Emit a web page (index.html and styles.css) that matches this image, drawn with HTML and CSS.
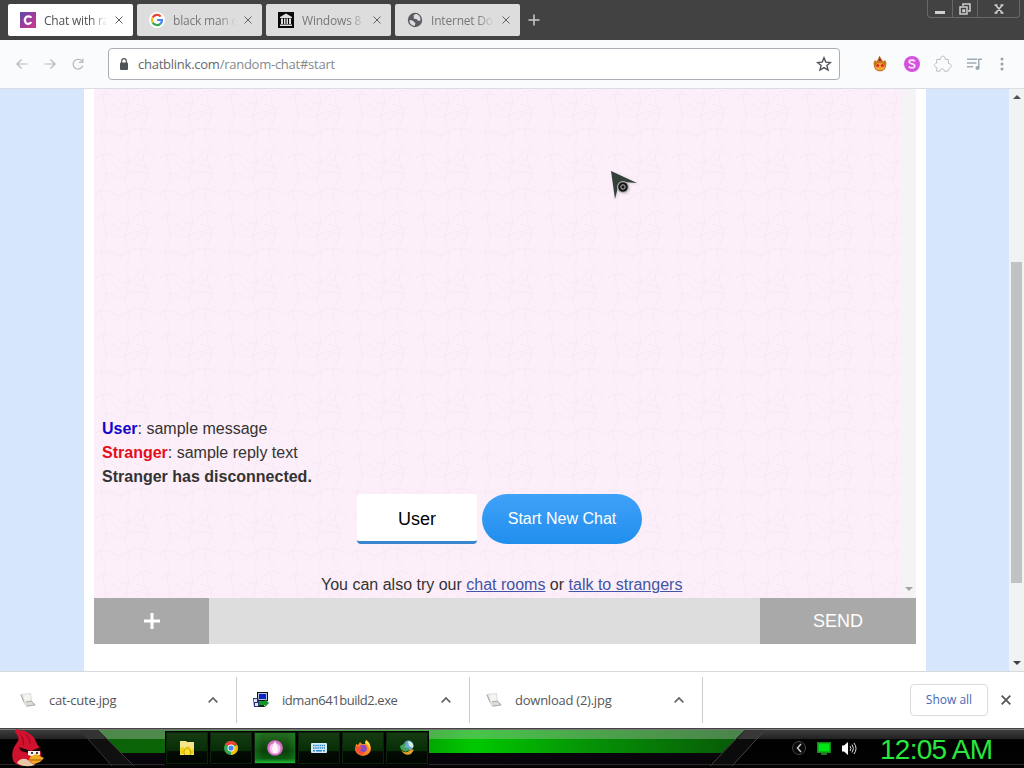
FILE: index.html
```html
<!DOCTYPE html>
<html lang="en">
<head>
<meta charset="utf-8">
<title>Random chat</title>
<link rel="stylesheet" href="styles.css">
</head>
<body>
<div class="screen">
  <header class="titlebar">
    <div class="tabs">
      <div class="tab active">
        <svg class="fav" viewBox="0 0 16 16"><defs><linearGradient id="cg" x1="0" y1="0" x2="1" y2="1"><stop offset="0" stop-color="#5c4ba8"/><stop offset=".6" stop-color="#a63a9c"/><stop offset="1" stop-color="#d03a8c"/></linearGradient></defs><rect width="16" height="16" fill="url(#cg)"/><path d="M11.3 5.8C10.5 4 6.7 3.6 5.4 6c-1 2.200-.6 5.200 2.100 5.800 1.800.2 3-.5 3.700-1.800" fill="none" stroke="#fff" stroke-width="2.300"/></svg>
        <span class="tab-title">Chat with ra</span>
        <svg class="x" viewBox="0 0 8 8"><path d="M.5.5l7 7M7.500.5l-7 7"/></svg>
      </div>
      <div class="tab">
        <svg class="fav" viewBox="0 0 16 16"><circle cx="8" cy="8" r="8" fill="#fff"/><g fill="none" stroke-width="2.200"><path d="M11.700 4.500A5 5 0 0 0 3.600 5.600" stroke="#ea4335"/><path d="M3.600 5.600a5 5 0 0 0 0 4.800" stroke="#fbbc05"/><path d="M3.600 10.400a5 5 0 0 0 7.700 1.400" stroke="#34a853"/><path d="M11.300 11.800A5 5 0 0 0 13 8H8.200" stroke="#4285f4"/></g></svg>
        <span class="tab-title">black man o</span>
        <svg class="x" viewBox="0 0 8 8"><path d="M.5.5l7 7M7.500.5l-7 7"/></svg>
      </div>
      <div class="tab">
        <svg class="fav" viewBox="0 0 16 16"><rect width="16" height="16" fill="#080808"/><path d="M2 5l6-3.500L14 5v1H2zM3 6.500h2V12H3zM6 6.500h1.500V12H6zM8.500 6.500H10V12H8.500zM11 6.500h2V12h-2zM2 12.500h12V14H2z" fill="#ddd"/></svg>
        <span class="tab-title">Windows 8</span>
        <svg class="x" viewBox="0 0 8 8"><path d="M.5.5l7 7M7.500.5l-7 7"/></svg>
      </div>
      <div class="tab">
        <svg class="fav" viewBox="0 0 16 16"><circle cx="8" cy="8" r="7.200" fill="#5b5b62"/><path d="M2.300 8.500c2-.5 3.700.1 4.500 1.200.6 1 2 .8 1.500 2.200L7.500 14C4.500 13.500 2.500 11.500 2.300 8.500zM9 2c-2 .6-3 1.300-2.200 2.500.8.8-.8 1.200-.1 2 1 .8 3.200.1 3.800 1.500.5 1 1.500 1.300 2.900.6C14 5.500 12.200 2.700 9 2z" fill="#dedddd"/></svg>
        <span class="tab-title">Internet Do</span>
        <svg class="x" viewBox="0 0 8 8"><path d="M.5.5l7 7M7.500.5l-7 7"/></svg>
      </div>
      <svg class="newtab" viewBox="0 0 12 12"><path d="M6 .5v11M.5 6h11"/></svg>
    </div>
    <div class="winbtns">
      <span class="wb w1"><svg viewBox="0 0 12 12"><path d="M1 9.500h10" stroke-width="3"/></svg></span>
      <span class="wb w2"><svg viewBox="0 0 12 12"><path d="M4 3V1h7v7H9M1 4h7v7H1zM4 7h1.500v1.500H4z" stroke-width="1.500"/></svg></span>
      <span class="wb w3"><svg viewBox="0 0 12 12"><path d="M2.500 2l7 8M9.500 2l-7 8M1.500 2h3M7.500 2h3M1.500 10h3M7.500 10h3" stroke-width="1.600"/></svg></span>
    </div>
  </header>

  <nav class="toolbar">
    <svg class="nav" viewBox="0 0 12 12"><path d="M11.500 6H1M5.500 1.500L1 6l4.500 4.500"/></svg>
    <svg class="nav" viewBox="0 0 12 12"><path d="M.5 6H11M6.500 1.500L11 6l-4.500 4.500"/></svg>
    <svg class="nav" viewBox="0 0 12 12"><path d="M10 3.200A4.900 4.900 0 1 0 10.800 7.500M10.800.5v3.800H7"/></svg>
    <div class="omnibox">
      <svg class="lock" viewBox="0 0 10 12"><rect x="1" y="4.500" width="8" height="7.500" rx="1" fill="#505356"/><path d="M2.700 5V3a2.300 2.300 0 0 1 4.600 0v2" fill="none" stroke="#505356" stroke-width="1.200"/></svg>
      <span class="url"><span class="host">chatblink.com</span>/random-chat#start</span>
      <svg class="star" viewBox="0 0 16 16"><path d="M8 1.800l1.800 4.300 4.600.4-3.500 3 1.100 4.500L8 11.600 4 14l1.100-4.500-3.500-3 4.600-.4z"/></svg>
    </div>
    <div class="ext">
      <svg class="e16" viewBox="0 0 16 16"><path d="M2 10C1 7 2 5.500 3 4l1.500 1.500L6 3l1.500-3L10 4l1.500 1.500L13 4c1 1.500 2 3 1 6-.5 7-11.500 7-12 0z" fill="#c8741c"/><path d="M3.500 10c0-4 9-4 9 0s-1.500 4-4.500 4-4.500 0-4.500-4z" fill="#f3a33c"/><circle cx="5.700" cy="9.500" r="1.500" fill="#d62b20"/><circle cx="10.300" cy="9.500" r="1.500" fill="#d62b20"/><path d="M7.500 0l2 5-3 0z" fill="#a82b2b"/></svg>
      <svg class="e16" viewBox="0 0 16 16"><circle cx="8" cy="8" r="8" fill="#d552df"/><path d="M10.800 5.400C9.500 3.500 5 3.600 5.200 6c.2 2.300 5.700 1.300 5.600 4-.3 2.400-4.700 2.400-6 .5" fill="none" stroke="#fbe2ff" stroke-width="1.900"/></svg>
      <svg class="e20" viewBox="0 0 20 20"><path d="M3 5h4c-.5-5 6-5 5.500 0H16v4.500c4 0 4 4.500 1 5L15.500 18h-4c0-3.500-5-3.500-5 0H3v-4c-3.500-1-3-4.500 0-5z" fill="none" stroke="#b4babd"/></svg>
      <svg class="e18" viewBox="0 0 18 16"><path d="M1 3h11M1 7h10M1 11h6.500M13.500 12V3H17" fill="none" stroke="#a0abb2" stroke-width="1.600"/><circle cx="12.200" cy="12.200" r="2.200" fill="#9aa8b2"/></svg>
      <svg class="dots" viewBox="0 0 4 14"><circle cx="2" cy="2" r="1.500"/><circle cx="2" cy="7" r="1.500"/><circle cx="2" cy="12" r="1.500"/></svg>
    </div>
  </nav>

  <main class="viewport">
    <div class="page">
      <div class="chat">
        <svg class="texture" width="807" height="509"><defs><pattern id="tex" width="64" height="60" patternUnits="userSpaceOnUse"><path d="M2 9q12-9 21 1t19-3 20 4M6 26c10-8 16 9 27 0s20 3 28-2M1 44c16-7 20 7 31 0s20-5 30 2M12 1c-8 14 6 19-2 34s3 17 1 25M32 2c8 15-6 23 1 36s-3 15 0 22M51 1c-6 15 7 19 0 32s-3 17 1 26M17 14l11 9M37 32l10-7M20 52l9-6M42 15l14 5"/></pattern></defs><rect width="807" height="509" fill="url(#tex)" stroke="none"/></svg>
        <div class="chat-body">
          <p class="msg"><b class="me">User</b>: sample message</p>
          <p class="msg"><b class="them">Stranger</b>: sample reply text</p>
          <p class="msg"><b>Stranger has disconnected.</b></p>
          <div class="restart"><div class="name">User</div><div class="start">Start New Chat</div></div>
          <p class="also">You can also try our <a>chat rooms</a> or <a>talk to strangers</a></p>
        </div>
        <div class="chat-scroll"><i></i></div>
      </div>
      <div class="composer">
        <div class="plus"><svg viewBox="0 0 16 16"><path d="M8 0v16M0 8h16"/></svg></div>
        <div class="entry"></div>
        <div class="send">SEND</div>
      </div>
    </div>
    <div class="scrollbar"><i class="up"></i><i class="thumb"></i><i class="down"></i></div>
  </main>

  <section class="downloads">
    <div class="dl">
      <svg class="file" viewBox="0 0 16 16"><path d="M0 2l11-1 1 8 4 4-10 2-2-4z" fill="#dddcda"/><path d="M3 3l7-1 1 7-6 1z" fill="#f4f3f0"/><path d="M6 10l5-1 4 4-8 1M1 3l3 7" fill="none" stroke="#aaa"/></svg>
      <span class="fname">cat-cute.jpg</span>
      <svg class="chev" viewBox="0 0 10 6"><path d="M.7 5.300L5 1l4.300 4.300"/></svg>
    </div>
    <div class="dl">
      <svg class="file" viewBox="0 0 16 16"><path d="M4 0h11v9H4z" fill="#111"/><path d="M5 1h9v7H5z" fill="#b9c4d8"/><path d="M6 2h7v5H6z" fill="#0b23c9"/><path d="M0 6h5l2 4-1 5H1z" fill="#26336e"/><path d="M1 7h3v3H1zM2 11h3v3H2z" fill="#dfe6f4"/><path d="M6 9h6V7l4 4-4 4v-2H6z" fill="#14972a"/><path d="M6 13h5l1 2H6z" fill="#102a10"/></svg>
      <span class="fname exe">idman641build2.exe</span>
      <svg class="chev" viewBox="0 0 10 6"><path d="M.7 5.300L5 1l4.300 4.300"/></svg>
    </div>
    <div class="dl">
      <svg class="file" viewBox="0 0 16 16"><path d="M0 2l11-1 1 8 4 4-10 2-2-4z" fill="#dddcda"/><path d="M3 3l7-1 1 7-6 1z" fill="#f4f3f0"/><path d="M6 10l5-1 4 4-8 1M1 3l3 7" fill="none" stroke="#aaa"/></svg>
      <span class="fname">download (2).jpg</span>
      <svg class="chev" viewBox="0 0 10 6"><path d="M.7 5.300L5 1l4.300 4.300"/></svg>
    </div>
    <div class="showall">Show all</div>
    <svg class="dlx" viewBox="0 0 10 10"><path d="M.7.7l8.600 8.600M9.300.7L.7 9.300"/></svg>
  </section>

  <footer class="taskbar">
    <svg class="bar-art" viewBox="0 0 1024 40"><defs>
      <linearGradient id="blk" x1="0" y1="0" x2="0" y2="1"><stop offset="0" stop-color="#444"/><stop offset=".27" stop-color="#222"/><stop offset=".29" stop-color="#000"/><stop offset="1" stop-color="#030303"/></linearGradient>
      <linearGradient id="grn" x1="0" y1="0" x2="1" y2="0"><stop offset="0" stop-color="#0b6207"/><stop offset=".4" stop-color="#087006"/><stop offset=".58" stop-color="#00c800"/><stop offset=".75" stop-color="#069506"/><stop offset="1" stop-color="#075707"/></linearGradient></defs>
      <rect width="1024" height="40" fill="url(#blk)"/>
      <path d="M98 2H745L722 25H118z" fill="url(#grn)"/>
      <path d="M98 2H745L736 11H105z" fill="#b5c2b5" opacity=".4"/>
      <path d="M118 25H722L706 38H132z" fill="#09060b"/>
      <path d="M80 2h18l36 36h-22z" fill="#101010"/><path d="M80 2h18l8 9H87z" fill="#333"/><path d="M80 2l32 36M98 2l36 36" stroke="#363636" fill="none"/>
      <path d="M745 2h20l-33 36h-23z" fill="#0b0b0b"/><path d="M745 2h20l-8 9h-20z" fill="#383838"/><path d="M765 2l-33 36M736 11l-26 27" stroke="#454545" fill="none"/>
      <path d="M0 1.500h1024" stroke="#777"/><path d="M0 36.500h1024" stroke="#292929"/>
    </svg>
    <svg class="bird" viewBox="0 0 32 38"><path d="M3 3C2 0 6-1 8 2c3-2 6 1 10 3 5 3 5 6 7 10 4 4 5 10 3 15-3 7-20 10-26 3C-1 28 0 20 4 15 7 11 8 9 3 3z" fill="#d0122f"/><path d="M8 6c3 2 4 6 3 10M13 5c4 3 5 6 5 10" fill="none" stroke="#8d071e"/><path d="M7 18l12 4 10-4v4l-9 3-11-3z" fill="#1d0508"/><path d="M16 22h12v4l-6 2-6-2z" fill="#f7f3ea"/><circle cx="20" cy="24" r="1"/><circle cx="25" cy="24" r="1"/><path d="M5 34c3-6 11-5 13-1l5 3c-6 2-13 2-18-2z" fill="#e6c8a6"/><path d="M18 28l6-3 8 4-4 4-6 2-5-3z" fill="#f2a91c"/><path d="M18 31l11 0" stroke="#9f5d0b"/></svg>
    <div class="tasks">
      <span class="task"><svg viewBox="0 0 16 16"><path d="M1 1h6l1 1h7v13H1z" fill="#f5e58a"/><path d="M2 8c2-2 4-1 4 2 0-5 6-5 6 0l3-1v5H1v-5z" fill="#f4d218"/><path d="M6 15c-2-3-1-6 2.500-7 3 2 4 4 2.500 7" fill="#ffe326" stroke="#a58b12" stroke-width=".8"/></svg></span>
      <span class="task"><svg viewBox="0 0 16 16"><circle cx="8" cy="8" r="7" fill="#34a853"/><path d="M8 8L1.900 4.500A7 7 0 0 1 14.200 5H8z" fill="#ea4335"/><path d="M8 8l6.200-3A7 7 0 0 1 8 15z" fill="#fbbc05"/><circle cx="8" cy="8" r="3.500" fill="#fff"/><circle cx="8" cy="8" r="2.600" fill="#4285f4"/></svg></span>
      <span class="task lit"><svg viewBox="0 0 16 16"><circle cx="8" cy="8" r="7.800" fill="#d86fc6"/><circle cx="8" cy="8.500" r="5.500" fill="#f2c4ea"/><path d="M8 1l3 7-1 5H6L5 8z" fill="#fff5fd"/></svg></span>
      <span class="task"><svg viewBox="0 0 16 16"><rect y="3" width="16" height="10" rx="1" fill="#d3eaf8"/><path d="M2 5.500h12M2 8h12" stroke="#3486c4" stroke-width="1.500" stroke-dasharray="1.500 .7"/><path d="M2 10.700h2m1 0h6m1 0h2" stroke="#3486c4" stroke-width="1.400"/></svg></span>
      <span class="task"><svg viewBox="0 0 16 16"><path d="M1 4l2 1 2-3 2 2h3l1-4c3 2 5 5 5 9-1 9-15 9-16 0z" fill="#ff8522"/><path d="M10 3c4 2 5 5 3 9l2-4c0-4-1-6-4-8z" fill="#ffdc3f"/><circle cx="8" cy="8.500" r="3.800" fill="#854bc5"/><path d="M1 6l6 1-2 4 5 2-4 2c-4-1-6-5-5-9z" fill="#f8503a"/></svg></span>
      <span class="task"><svg viewBox="0 0 16 16"><circle cx="9.500" cy="5.500" r="5" fill="#6ba9d0"/><path d="M9 1c4 1 6 3 5 7l-4-2z" fill="#d9ece6"/><path d="M1 6l7-4-3 5 6 2-4 3C3 11 1 9 1 6z" fill="#43a454"/><path d="M2 10c3 3 7 3 10-1l3 1-3 4c-4 2-8 0-10-4z" fill="#dfa12c"/></svg></span>
    </div>
    <div class="tray">
      <svg viewBox="0 0 16 16"><circle cx="8" cy="8" r="6.500" fill="#090909" stroke="#444"/><path d="M10 4L6.500 8l3.500 4" fill="none" stroke="#ccc" stroke-width="1.500"/></svg>
      <svg viewBox="0 0 16 16"><path d="M1 2h14v11H1z" fill="#168a1a"/><path d="M2.500 3.500h11v8h-11z" fill="#00e515"/><path d="M5 13h6v2H5z" fill="#277326"/></svg>
      <svg viewBox="0 0 16 16"><path d="M1 5.500h2L7 2v13l-4-3.500H1z" fill="#fff"/><path d="M9 6q2 2.500 0 5M11 4.500q3 4 0 8M13 3q4 5.500 0 11" fill="none" stroke="#ddd"/></svg>
    </div>
    <div class="clock">12:05 AM</div>
  </footer>

  <svg class="cursor" viewBox="0 0 28 30"><path d="M1 1l26 12-13-1-6 5-3 12z" fill="#34413b"/><circle cx="13" cy="17" r="6" fill="#b5b0b3"/><circle cx="13" cy="17" r="4.800" fill="#171717"/><circle cx="13" cy="17" r="2.200" fill="none" stroke="#bbb"/></svg>
</div>
</body>
</html>
```

FILE: styles.css
```css
* { box-sizing: border-box; }
body { margin: 0; font-family: "Liberation Sans", Arial, sans-serif; }
svg { display: block; flex: none; }
.screen { width: 1024px; height: 768px; display: flex; flex-direction: column; position: relative; overflow: hidden; }

.titlebar { height: 40px; background: #424242; display: flex; justify-content: space-between; flex: none; }
.tabs { display: flex; gap: 4px; padding: 4px 0 0 8px; }
.tab { width: 125px; height: 32px; background: #dedddd; border-radius: 2px; display: flex; align-items: center; padding: 0 10px 0 12px; font: 12px "Open Sans", "Noto Sans", sans-serif; letter-spacing: -.2px; color: #77777a; }
.tab.active { background: #fff; color: #505154; }
.fav { width: 16px; height: 16px; margin-right: 8px; }
.tab-title { width: 66px; overflow: hidden; white-space: nowrap; mask-image: linear-gradient(90deg, #000 70%, transparent 96%); }
.x { width: 8px; height: 8px; margin-left: auto; fill: none; stroke: #606064; }
.newtab { width: 12px; height: 12px; margin: 10px 0 0 4px; fill: none; stroke: #ccc; stroke-width: 1.5; }
.winbtns { display: flex; height: 18px; margin-right: 4px; border: 1px solid #686868; border-top: 0; border-radius: 0 0 4px 4px; }
.wb { display: flex; align-items: center; justify-content: center; width: 25px; border-right: 1px solid #686868; }
.w3 { width: 41px; border: 0; }
.wb svg { width: 12px; height: 12px; fill: none; stroke: #cfcfcf; }

.toolbar { height: 49px; flex: none; background: #fafbfd; border-bottom: 1px solid #dadce3; display: flex; align-items: center; padding-left: 16px; }
.nav { width: 12px; height: 12px; margin-right: 16px; fill: none; stroke: #b4b7ba; stroke-width: 1.2; }
.omnibox { width: 732px; height: 32px; margin-left: 8px; border: 1px solid #a9afb4; border-radius: 4px; background: #fff; display: flex; align-items: center; padding: 0 7px 0 10px; }
.lock { width: 10px; height: 12px; }
.url { margin-left: 9px; font: 13px "Open Sans", "Noto Sans", sans-serif; color: #85888b; letter-spacing: -.25px; }
.host { color: #65686b; }
.star { width: 16px; height: 16px; margin-left: auto; fill: none; stroke: #505357; stroke-width: 1.4; }
.ext { display: flex; align-items: center; padding-left: 32px; gap: 14px; }
.e16 { width: 16px; height: 16px; margin-right: 2px; }
.e20 { width: 18px; height: 20px; margin-left: -2px; }
.e18 { width: 17px; height: 16px; }
.dots { width: 4px; height: 14px; margin-left: 3px; fill: #9ba0a4; }

.viewport { height: 582px; flex: none; display: flex; background: #d6e6fc; }
.page { width: 842px; margin-left: 84px; padding: 0 10px; background: #fff; }
.chat { height: 509px; display: flex; position: relative; background: #fdeff9; }
.texture { position: absolute; left: 0; top: 0; fill: none; stroke: #f2e5f0; stroke-width: .9; opacity: .7; }
.chat-body { flex: 1; position: relative; display: flex; flex-direction: column; padding-top: 328px; font-size: 16px; line-height: 24px; color: #333; }
.msg { margin: 0 0 0 8px; }
.me { color: #1207c9; }
.them { color: #e60d1c; }
.restart { display: flex; gap: 5px; margin: 5px 0 0 263px; }
.name { width: 120px; height: 50px; background: #fff; border-bottom: 3px solid #3a86ce; border-radius: 4px; color: #000; font-size: 18px; line-height: 50px; text-align: center; }
.start { width: 160px; height: 50px; border-radius: 25px; background: linear-gradient(#40a2f9, #218eed); color: #fff; line-height: 50px; text-align: center; font-size: 16px; }
.also { margin: 29px 0 0; padding-left: 227px; white-space: nowrap; }
.also a { color: #4055a5; text-decoration: underline; }
.chat-scroll { width: 15px; background: #f5f3f5; position: relative; display: flex; align-items: flex-end; justify-content: center; padding-bottom: 7px; }
.chat-scroll i { border: 4px solid transparent; border-bottom: 0; border-top-color: #a5a3a5; }
.composer { display: flex; height: 46px; }
.plus { width: 115px; background: #a9a9a9; display: flex; align-items: center; justify-content: center; }
.plus svg { width: 16px; height: 16px; stroke: #fff; stroke-width: 3; }
.entry { flex: 1; background: #ddd; }
.send { width: 156px; background: #a9a9a9; color: #fff; font-size: 18px; line-height: 46px; text-align: center; }
.scrollbar { width: 15px; margin-left: auto; background: #f1f2f4; display: flex; flex-direction: column; align-items: center; padding: 6px 0; }
.up { border: 4px solid transparent; border-top: 0; border-bottom-color: #505050; }
.thumb { width: 11px; height: 321px; margin-top: 163px; background: #c1c2c4; }
.down { margin-top: auto; border: 4px solid transparent; border-bottom: 0; border-top-color: #404040; }

.downloads { height: 57px; flex: none; background: #fff; border-top: 1px solid #d7d9dc; display: flex; align-items: center; }
.dl { width: 233px; height: 46px; border-right: 1px solid #ccc; display: flex; align-items: center; padding: 0 18px 0 16px; }
.dl:first-child { width: 237px; padding-left: 20px; }
.file { width: 16px; height: 16px; }
.fname { margin-left: 13px; font: 13px "Open Sans", "Noto Sans", sans-serif; color: #55575a; letter-spacing: -.24px; }
.exe { letter-spacing: -.45px; }
.chev { width: 10px; height: 6px; margin-left: auto; fill: none; stroke: #606366; stroke-width: 1.7; }
.showall { width: 78px; height: 32px; margin-left: 207px; border: 1px solid #d9dce0; border-radius: 4px; color: #4369b8; font: 500 12px/30px "Open Sans", "Noto Sans", sans-serif; text-align: center; }
.dlx { width: 10px; height: 10px; margin-left: 13px; fill: none; stroke: #55585b; stroke-width: 1.8; }

.taskbar { height: 40px; flex: none; background: #000; display: flex; align-items: center; position: relative; }
.bar-art { position: absolute; left: 0; top: 0; width: 1024px; height: 40px; }
.bird { width: 32px; height: 38px; margin-left: 12px; position: relative; }
.tasks { display: flex; gap: 2px; margin-left: 122px; position: relative; }
.task { width: 42px; height: 32px; border: 1px solid #0a240a; outline: 1px solid #000; background: linear-gradient(#163b12 0, #062d05 60%, #040a04 62%, #020602); display: flex; align-items: center; justify-content: center; }
.task.lit { background: linear-gradient(90deg, #1ca72a55, #0000 20% 80%, #1ca72a55), linear-gradient(#246c22, #0b3f0a 60%, #0b5a12 85%, #20bd36); }
.task svg { width: 16px; height: 16px; }
.tray { display: flex; gap: 9px; margin-left: 363px; position: relative; }
.tray svg { width: 16px; height: 16px; }
.clock { margin-left: 23px; position: relative; color: #27e83b; font-size: 28px; line-height: 40px; white-space: nowrap; letter-spacing: -.75px; padding-top: 3px; }
.cursor { position: absolute; left: 610px; top: 170px; width: 28px; height: 30px; filter: drop-shadow(1px 1px 1px #9996); }
```
